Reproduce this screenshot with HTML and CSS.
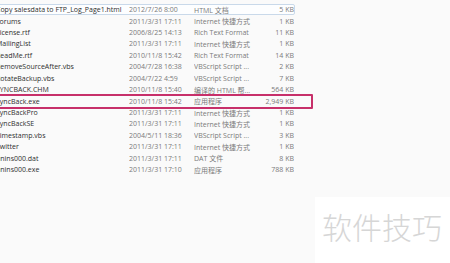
FILE: index.html
```html
<!DOCTYPE html>
<html lang="zh-CN">
<head>
    <meta charset="UTF-8">
    <title>SyncBack</title>
    <link rel="stylesheet" href="styles.css">
</head>
<body>
    <div class="file-list">
        <div class="row hover">
            <span class="name">Copy salesdata to FTP_Log_Page1.html</span>
            <span class="date">2012/7/26 8:00</span>
            <span class="type">HTML 文档</span>
            <span class="size">5 KB</span>
        </div>
        <div class="row">
            <span class="name">Forums</span>
            <span class="date">2011/3/31 17:11</span>
            <span class="type">Internet 快捷方式</span>
            <span class="size">1 KB</span>
        </div>
        <div class="row">
            <span class="name">License.rtf</span>
            <span class="date">2006/8/25 14:13</span>
            <span class="type">Rich Text Format</span>
            <span class="size">11 KB</span>
        </div>
        <div class="row">
            <span class="name">MailingList</span>
            <span class="date">2011/3/31 17:11</span>
            <span class="type">Internet 快捷方式</span>
            <span class="size">1 KB</span>
        </div>
        <div class="row">
            <span class="name">ReadMe.rtf</span>
            <span class="date">2010/11/8 15:42</span>
            <span class="type">Rich Text Format</span>
            <span class="size">14 KB</span>
        </div>
        <div class="row">
            <span class="name">RemoveSourceAfter.vbs</span>
            <span class="date">2004/7/28 16:38</span>
            <span class="type">VBScript Script ...</span>
            <span class="size">2 KB</span>
        </div>
        <div class="row">
            <span class="name">RotateBackup.vbs</span>
            <span class="date">2004/7/22 4:59</span>
            <span class="type">VBScript Script ...</span>
            <span class="size">7 KB</span>
        </div>
        <div class="row">
            <span class="name">SYNCBACK.CHM</span>
            <span class="date">2010/11/8 15:40</span>
            <span class="type">编译的 HTML 帮...</span>
            <span class="size">564 KB</span>
        </div>
        <div class="row marked">
            <span class="name">SyncBack.exe</span>
            <span class="date">2010/11/8 15:42</span>
            <span class="type">应用程序</span>
            <span class="size">2,949 KB</span>
        </div>
        <div class="row">
            <span class="name">SyncBackPro</span>
            <span class="date">2011/3/31 17:11</span>
            <span class="type">Internet 快捷方式</span>
            <span class="size">1 KB</span>
        </div>
        <div class="row">
            <span class="name">SyncBackSE</span>
            <span class="date">2011/3/31 17:11</span>
            <span class="type">Internet 快捷方式</span>
            <span class="size">1 KB</span>
        </div>
        <div class="row">
            <span class="name">Timestamp.vbs</span>
            <span class="date">2004/5/11 18:36</span>
            <span class="type">VBScript Script ...</span>
            <span class="size">3 KB</span>
        </div>
        <div class="row">
            <span class="name">Twitter</span>
            <span class="date">2011/3/31 17:11</span>
            <span class="type">Internet 快捷方式</span>
            <span class="size">1 KB</span>
        </div>
        <div class="row">
            <span class="name">unins000.dat</span>
            <span class="date">2011/3/31 17:11</span>
            <span class="type">DAT 文件</span>
            <span class="size">8 KB</span>
        </div>
        <div class="row">
            <span class="name">unins000.exe</span>
            <span class="date">2011/3/31 17:10</span>
            <span class="type">应用程序</span>
            <span class="size">788 KB</span>
        </div>
    </div>

    <div class="watermark">软件技巧</div>
</body>
</html>
```

FILE: styles.css
```css
* {
    margin: 0;
    padding: 0;
    box-sizing: border-box;
}

body {
    width: 450px;
    height: 263px;
    overflow: hidden;
    position: relative;
    background-color: #fafafa;
    font-family: "Open Sans", "Noto Sans CJK SC", sans-serif;
    font-size: 7px;
    color: #2e2e2e;
}

/* explorer details list */
.file-list {
    width: 300px;
    margin-left: -5px;
    padding-top: 4px;
}

.row {
    position: relative;
    display: grid;
    grid-template-columns: 133px 65px 65px 35px;
    align-items: center;
    height: 11.43px;
    border: 1px solid transparent;
    border-radius: 2px;
    white-space: nowrap;
}

.row span {
    overflow: hidden;
}

.row .date,
.row .type,
.row .size {
    color: #7b7b7b;
}

.row .size {
    text-align: right;
}

.row.hover {
    border-color: #c9d9ea;
    background-color: #fdfeff;
}

/* red annotation box round the exe */
.row.marked::after {
    content: "";
    position: absolute;
    left: -6px;
    right: -19px;
    top: -2px;
    bottom: -3px;
    border: 2px solid #c7306a;
    border-radius: 1px;
}

.watermark {
    position: absolute;
    left: 315px;
    top: 197px;
    width: 135px;
    height: 66px;
    padding: 11px 0 0 7px;
    background-color: #fff;
    font-family: "Noto Sans CJK SC", sans-serif;
    font-size: 30px;
    font-weight: 300;
    line-height: 1.2;
    color: #d6d6d6;
}
```
